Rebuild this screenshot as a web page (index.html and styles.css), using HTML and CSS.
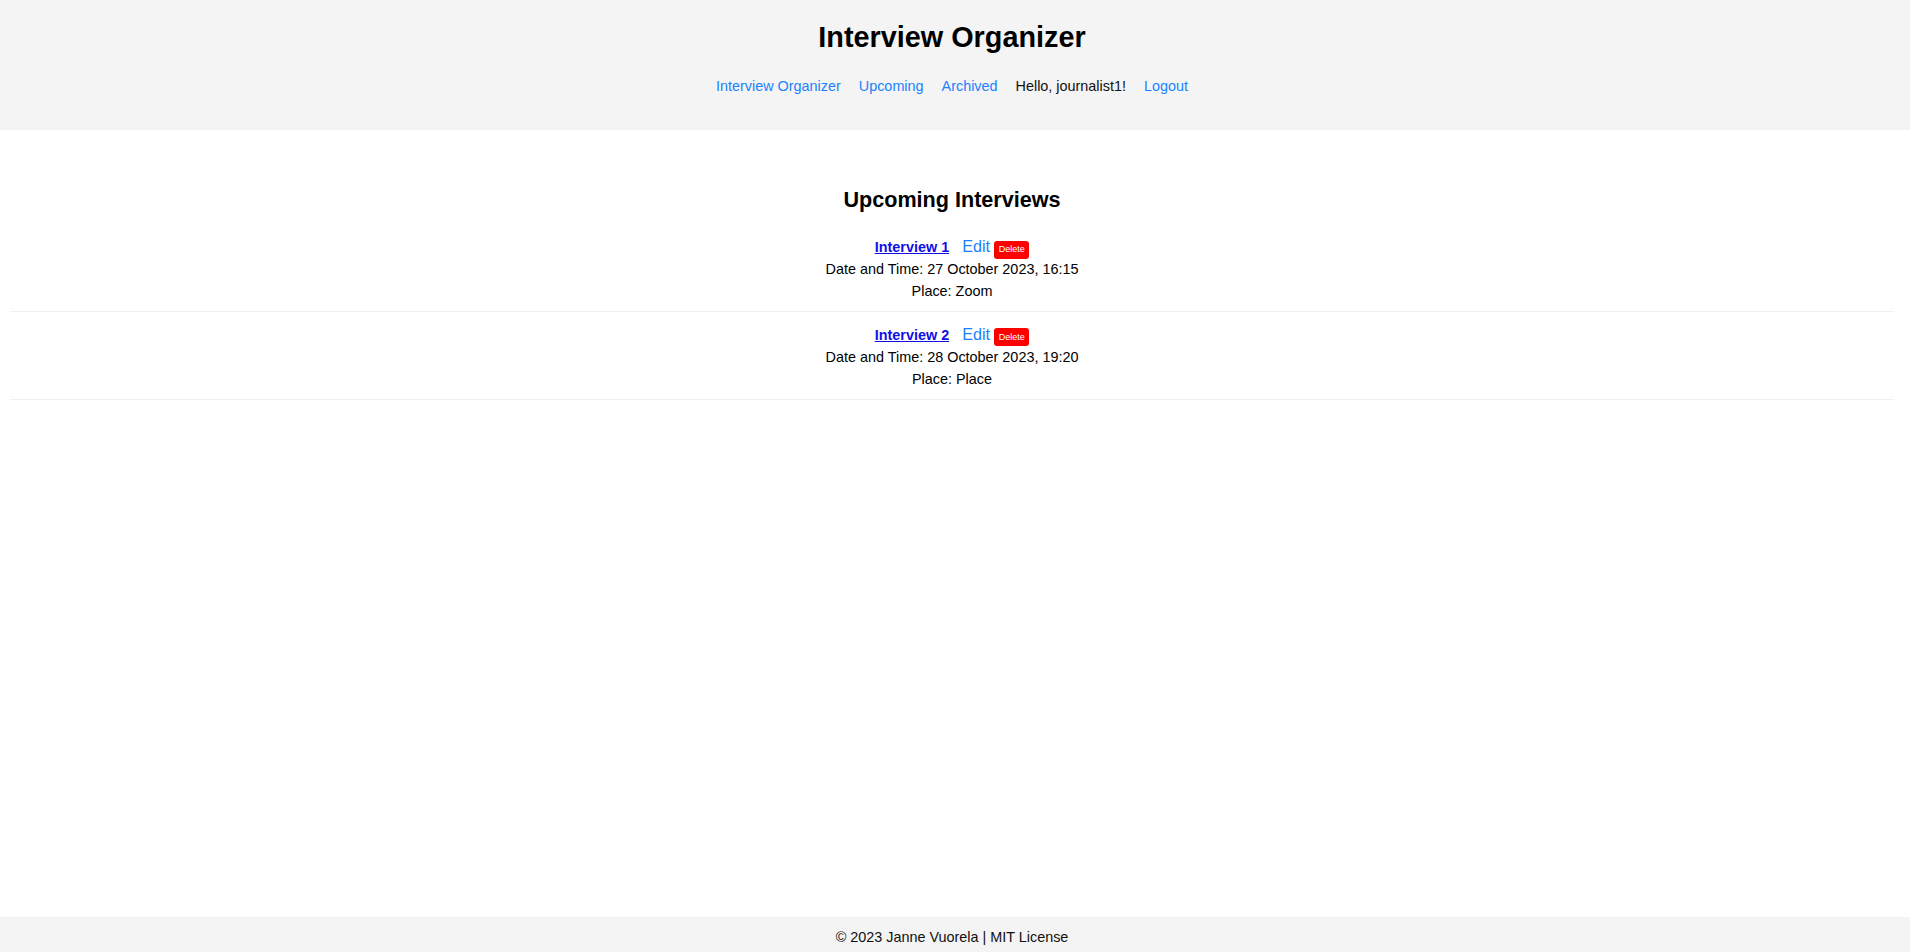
FILE: index.html
```html
<!DOCTYPE html>
<html lang="en">
<head>
<meta charset="utf-8">
<title>Interview Organizer</title>
<link rel="stylesheet" href="styles.css">
</head>
<body>
<header class="site-header">
  <div class="header-inner">
    <h1 class="site-title">Interview Organizer</h1>
    <nav class="site-nav">
      <a class="nav-link" href="#">Interview Organizer</a>
      <a class="nav-link" href="#">Upcoming</a>
      <a class="nav-link" href="#">Archived</a>
      <span class="nav-text">Hello, journalist1!</span>
      <a class="nav-link" href="#">Logout</a>
    </nav>
  </div>
</header>
<main class="content">
  <h2 class="section-title">Upcoming Interviews</h2>
  <ul class="interview-list">
    <li class="interview-item">
      <div class="interview-head"><a class="interview-link" href="#">Interview 1</a> <a class="edit-link" href="#">Edit</a> <button class="delete-btn" type="button">Delete</button></div>
      <div class="interview-line">Date and Time: 27 October 2023, 16:15</div>
      <div class="interview-line">Place: Zoom</div>
    </li>
    <li class="interview-item">
      <div class="interview-head"><a class="interview-link" href="#">Interview 2</a> <a class="edit-link" href="#">Edit</a> <button class="delete-btn" type="button">Delete</button></div>
      <div class="interview-line">Date and Time: 28 October 2023, 19:20</div>
      <div class="interview-line">Place: Place</div>
    </li>
  </ul>
</main>
<footer class="site-footer">
  <div class="footer-inner">© 2023 Janne Vuorela | MIT License</div>
</footer>
</body>
</html>
```

FILE: styles.css
```css
html, body {
  margin: 0;
  padding: 0;
}

body {
  min-height: 100vh;
  display: flex;
  flex-direction: column;
  font-family: "Liberation Sans", Arial, sans-serif;
  font-size: 14.4px;
  color: #000;
  background: #fff;
}

.site-header {
  background: #f4f4f4;
}

.header-inner {
  padding: 0 6px 35.5px 0;
  text-align: center;
}

.site-title {
  margin: 0;
  padding-top: 20.9px;
  font-size: 28.8px;
  font-weight: bold;
  line-height: 33.1px;
}

.site-nav {
  margin-top: 23.9px;
  display: flex;
  justify-content: center;
  gap: 18px;
  line-height: 16.5px;
}

.nav-link {
  color: #1a82ff;
  text-decoration: none;
}

.nav-text {
  color: #111;
}

.content {
  flex: 1;
  margin: 0 16px 0 10px;
  text-align: center;
}

.section-title {
  margin: 58.5px 0 11.5px;
  font-size: 21.6px;
  font-weight: bold;
  line-height: 24.8px;
}

.interview-list {
  list-style: none;
  margin: 0;
  padding: 0;
}

.interview-item {
  padding: 11.8px 0 8.6px;
  border-bottom: 1px solid #f0f0f0;
}

.interview-head {
  height: 23px;
  line-height: 21.6px;
}

.interview-line {
  height: 21.6px;
  line-height: 21.6px;
}

.interview-link {
  color: #1010e6;
  font-weight: bold;
  text-decoration: underline;
}

.edit-link {
  margin-left: 9px;
  color: #1a82ff;
  font-size: 16.2px;
  text-decoration: none;
}

.delete-btn {
  display: inline-block;
  vertical-align: baseline;
  border: none;
  border-radius: 3px;
  background: #ff0000;
  color: #fff;
  font-family: "Liberation Sans", Arial, sans-serif;
  font-size: 9px;
  line-height: 10.5px;
  padding: 3.8px 4.6px;
  margin: 0;
  cursor: pointer;
}

.site-footer {
  background: #f4f4f4;
}

.footer-inner {
  padding: 12px 6px 6.5px 0;
  text-align: center;
  line-height: 16.5px;
  color: #111;
}
```
